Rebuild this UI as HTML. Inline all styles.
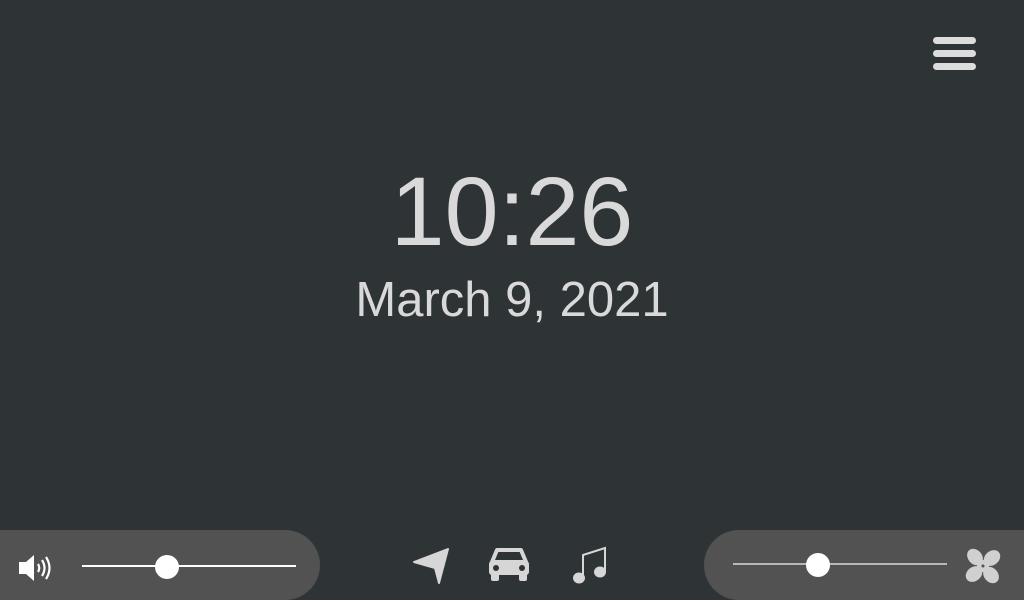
<!DOCTYPE html>
<html><head><style>
html,body{margin:0;padding:0}
body{width:1024px;height:600px;background:#2e3436;position:relative;overflow:hidden;font-family:"Liberation Sans",sans-serif;color:#d9d9d9}
.menu{position:absolute;left:933px;width:43px;height:7px;border-radius:4px;background:#dcdcdc}
.t{position:absolute;left:0;width:1024px;text-align:center;line-height:1}
.panel{position:absolute;top:530px;height:70px;width:320px;background:#525252}
.line{position:absolute;height:2px}
.knob{position:absolute;width:24px;height:24px;border-radius:50%;background:#fff}
</style></head><body>
<div class="menu" style="top:37px"></div>
<div class="menu" style="top:50px"></div>
<div class="menu" style="top:63px"></div>
<div class="t" style="top:163px;font-size:97px">10:26</div>
<div class="t" style="top:276px;font-size:49px">March 9, 2021</div>

<div class="panel" style="left:0;border-radius:0 35px 35px 0">
  <svg style="position:absolute;left:18px;top:24px" width="36" height="28" viewBox="0 0 36 28">
    <path d="M1 8h7l8-7v26l-8-7H1z" fill="#fff"/>
    <path d="M20 10q2.5 4 0 8M24 6q5 8 0 16M28 3q7 11 0 22" stroke="#fff" stroke-width="2.2" fill="none"/>
  </svg>
  <div class="line" style="left:82px;top:35px;width:214px;background:#fff"></div>
  <div class="knob" style="left:155px;top:25px"></div>
</div>

<svg style="position:absolute;left:412px;top:547px" width="38" height="38" viewBox="0 0 38 38">
  <path d="M2 15L36 2 27 36 23 21z" fill="#d6d6d6" stroke="#d6d6d6" stroke-linejoin="round" stroke-width="2"/>
</svg>
<svg style="position:absolute;left:488px;top:547px" width="42" height="36" viewBox="0 0 42 36">
  <path d="M9 3h24l5 12h-34z" fill="none" stroke="#d6d6d6" stroke-width="4" stroke-linejoin="round"/>
  <rect x="1" y="14" width="40" height="14" rx="3" fill="#d6d6d6"/>
  <rect x="3" y="26" width="8" height="8" rx="2" fill="#d6d6d6"/>
  <rect x="31" y="26" width="8" height="8" rx="2" fill="#d6d6d6"/>
  <circle cx="8" cy="21" r="3" fill="#2e3436"/><circle cx="34" cy="21" r="3" fill="#2e3436"/>
</svg>
<svg style="position:absolute;left:572px;top:546px" width="36" height="38" viewBox="0 0 36 38">
  <path d="M11 32V9L33 2v24" stroke="#d6d6d6" stroke-width="2" fill="none"/>
  <ellipse cx="7" cy="32" rx="6" ry="5.5" fill="#d6d6d6"/>
  <ellipse cx="28" cy="26" rx="6" ry="5.5" fill="#d6d6d6"/>
</svg>

<div class="panel" style="left:704px;border-radius:35px 0 0 35px">
  <div class="line" style="left:29px;top:33px;width:214px;background:#b8b8b8"></div>
  <div class="knob" style="left:102px;top:23px"></div>
  <svg style="position:absolute;left:260px;top:17px" width="38" height="38" viewBox="-19 -19 38 38">
    <g fill="#d0d0d0">
      <ellipse cx="-8" cy="-9" rx="7" ry="9" transform="rotate(-40 -8 -9)"/>
      <ellipse cx="9" cy="-8" rx="7" ry="9" transform="rotate(50 9 -8)"/>
      <ellipse cx="8" cy="9" rx="7" ry="9" transform="rotate(-40 8 9)"/>
      <ellipse cx="-9" cy="8" rx="7" ry="9" transform="rotate(50 -9 8)"/>
      <circle r="6"/>
    </g>
    <circle r="1.5" fill="#525252"/>
  </svg>
</div>
</body></html>
